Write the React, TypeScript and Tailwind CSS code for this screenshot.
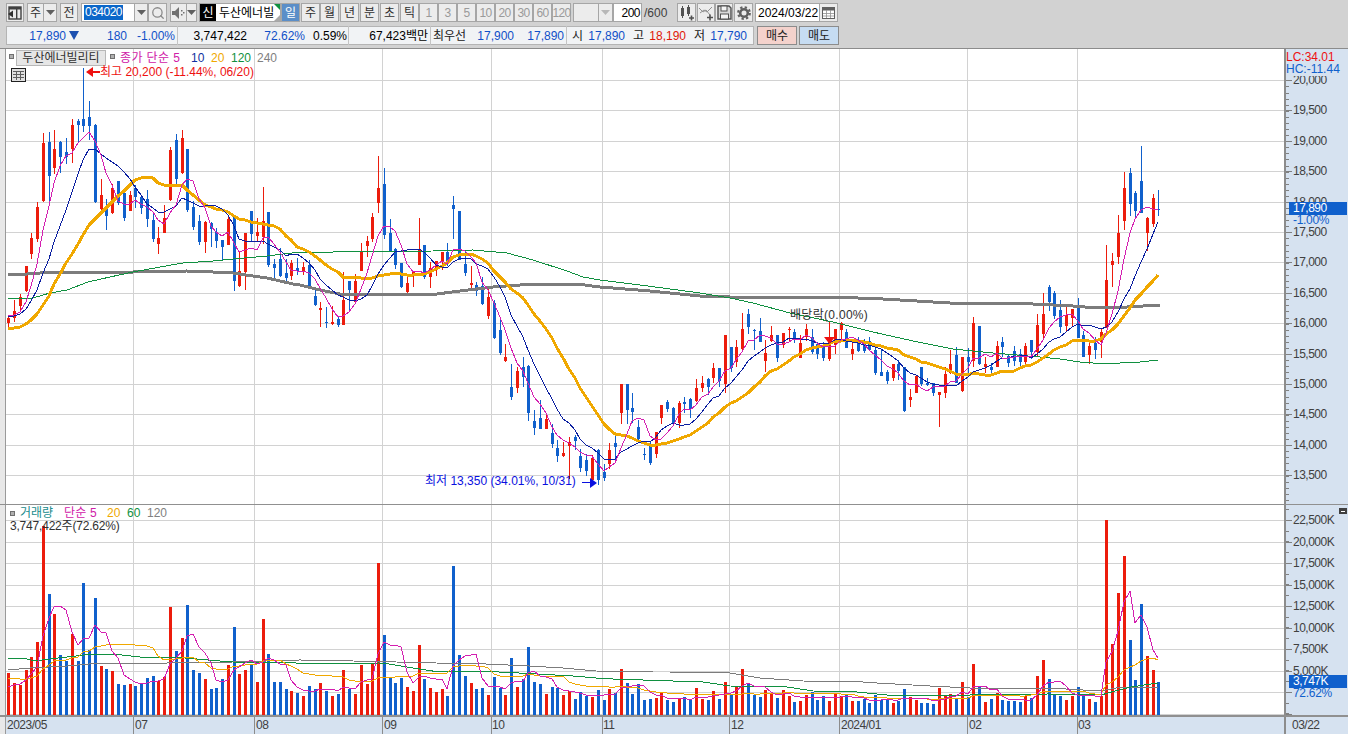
import React from "react";
import { Search } from "lucide-react";

// candle data in page pixels: [up, bodyTop, bodyBottom, high, low]
const candles: number[][] = [
  [1,318,323,317,330],[1,311,318,300,322],[1,297,306,294,310],[1,266,291,266,292],[1,238,254,233,259],
  [1,207,239,202,242],[1,143,201,133,202],[0,142,176,132,201],[1,149,168,130,174],[0,142,157,141,173],
  [0,152,157,138,164],[1,125,149,119,163],[0,121,125,119,142],[0,119,126,68,132],[0,117,126,101,140],
  [0,125,202,124,203],[1,195,209,179,210],[0,208,216,199,230],[1,188,213,184,214],[0,181,203,181,205],
  [0,193,218,192,221],[1,195,211,191,211],[0,188,197,185,208],[0,197,208,195,214],[0,199,219,190,227],
  [0,220,239,213,242],[1,238,244,227,254],[1,218,233,205,233],[1,150,200,147,201],[0,140,179,134,184],
  [1,138,173,130,174],[0,149,210,149,212],[0,207,227,201,230],[0,221,242,215,245],[1,222,242,221,253],
  [0,223,229,222,247],[0,232,241,228,248],[0,240,247,240,261],[1,219,245,216,245],[0,216,281,216,291],
  [1,271,286,252,287],[1,233,272,233,290],[0,211,234,211,241],[1,232,236,218,242],[1,221,237,187,244],
  [0,212,265,212,267],[0,264,268,259,281],[0,259,276,248,277],[0,273,278,259,283],[1,263,276,260,280],
  [0,268,271,258,275],[1,267,271,262,275],[0,265,287,260,288],[0,296,305,287,306],[1,308,310,302,327],
  [0,322,323,307,328],[1,322,324,306,325],[0,319,325,317,327],[1,300,325,272,325],[0,281,290,281,312],
  [1,281,302,274,303],[1,251,271,243,271],[1,241,246,236,257],[1,217,239,213,242],[1,188,203,156,213],
  [0,184,235,168,239],[0,233,252,219,252],[0,249,265,248,269],[0,263,287,263,288],[1,283,292,277,293],
  [1,271,276,271,287],[1,249,265,218,265],[0,245,277,245,279],[1,268,277,262,288],[1,261,270,261,276],
  [1,252,261,252,270],[0,252,262,243,266],[0,205,209,196,239],[0,211,260,211,260],[0,264,273,250,276],
  [1,283,285,266,291],[0,285,291,282,296],[0,286,304,277,305],[1,297,316,288,319],[0,303,338,300,339],
  [0,330,353,320,355],[1,357,361,344,362],[0,387,397,364,400],[1,371,388,367,393],[0,367,377,357,387],
  [0,366,413,365,421],[0,421,428,410,435],[0,418,429,400,429],[1,419,429,414,429],[0,433,444,424,448],
  [0,448,456,440,462],[1,453,456,442,457],[1,442,446,437,479],[0,437,441,435,450],[0,456,468,449,472],
  [0,460,471,454,476],[1,458,480,455,485],[0,450,480,449,485],[0,472,478,464,481],[1,450,464,443,469],
  [0,443,447,433,460],[1,384,413,384,424],[0,384,410,384,424],[0,408,412,393,423],[0,427,439,420,443],
  [0,454,455,448,460],[0,446,463,441,465],[1,432,454,432,458],[1,405,418,405,424],[0,402,409,400,412],
  [0,408,423,407,425],[1,403,423,401,428],[0,402,404,397,413],[0,399,409,398,418],[1,388,401,379,402],
  [1,383,388,376,392],[0,379,387,378,395],[1,368,378,363,383],[0,368,381,368,387],[1,335,384,335,393],
  [0,347,368,347,372],[1,347,362,340,367],[1,329,349,313,350],[0,314,327,309,334],[0,330,331,329,350],
  [0,331,342,318,342],[1,353,361,340,372],[1,335,341,326,342],[0,335,358,335,362],[1,333,345,333,348],
  [1,329,330,327,341],[0,332,339,329,343],[1,343,358,335,358],[1,329,337,324,341],[0,337,352,329,354],
  [0,344,354,342,359],[0,347,358,342,361],[1,338,359,322,361],[1,329,345,329,354],[1,323,330,322,341],
  [0,332,348,329,348],[1,349,354,339,360],[0,341,351,337,352],[0,343,351,339,353],[0,341,350,337,350],
  [0,350,373,347,375],[0,372,376,350,376],[0,372,381,370,384],[1,364,378,364,381],[0,364,371,360,380],
  [0,367,411,367,412],[1,397,400,389,407],[1,376,393,376,393],[0,367,384,367,386],[0,383,385,378,386],
  [0,383,393,383,396],[1,392,395,392,427],[1,374,393,367,398],[1,364,373,350,374],[0,355,383,347,383],
  [1,357,391,357,392],[0,357,362,348,375],[1,323,361,317,367],[0,326,364,326,365],[1,364,367,357,373],
  [0,367,370,363,375],[1,346,367,341,367],[0,342,347,337,357],[0,356,363,355,367],[0,351,361,346,366],
  [0,354,362,349,366],[1,346,362,343,365],[0,340,352,340,359],[1,325,352,314,357],[1,314,334,293,339],
  [0,287,302,285,311],[0,293,316,291,319],[0,310,327,300,333],[1,315,326,307,332],[1,309,318,309,326],
  [0,305,338,298,338],[0,335,357,331,357],[1,346,355,340,364],[0,343,350,337,359],[1,332,342,329,358],
  [1,280,327,245,328],[1,261,265,253,287],[1,233,257,215,264],[1,188,221,172,230],[0,173,204,168,216],
  [0,193,211,191,217],[0,181,213,146,213],[1,218,233,217,251],[1,198,224,194,227],[0,209,210,190,216],
];

// volume bar tops in page pixels
const volTops: number[] = [
  673,683,685,670,657,642,526,594,614,655,661,634,661,583,650,598,666,669,671,684,
  685,684,686,683,678,676,681,677,607,651,638,605,670,673,679,689,688,679,665,627,
  674,670,665,682,619,654,682,682,689,691,693,696,686,689,683,691,696,694,670,689,
  694,665,684,664,563,635,678,683,678,687,691,645,679,688,692,689,696,566,655,676,
  683,689,688,695,677,688,695,658,687,679,647,682,684,694,687,688,695,691,699,692,
  696,697,690,700,689,693,669,683,694,684,700,699,698,693,700,702,699,697,700,688,
  699,700,691,699,682,695,687,669,683,695,697,690,693,698,690,696,702,701,695,692,
  700,696,701,694,696,695,701,701,699,703,695,700,699,703,701,689,697,700,703,703,
  704,688,696,694,699,682,697,664,686,702,699,693,700,701,701,702,696,698,676,660,
  679,695,696,700,696,687,695,699,702,696,520,644,593,556,640,680,604,656,670,682,
];

const barX = (i: number) => Math.round(8.2 + i * 5.78);

const sma = (vals: number[], hist: number[], n: number) => {
  const all = [...hist, ...vals];
  return vals.map((_, i) => {
    const end = i + hist.length + 1;
    const win = all.slice(Math.max(0, end - n), end);
    return Math.round(win.reduce((a, b) => a + b, 0) / win.length);
  });
};

const toPoints = (vals: number[]) => vals.map((y, i) => `${barX(i)},${y}`).join(" ");

const closes = candles.map((c) => (c[0] ? c[1] : c[2]));
const priceHist = [320, 320, 320, 320, 320, 320, 370, 370, 370, 370, 316, 316, 316, 316, 316, 316, 316, 316, 316];
const volHist = [...Array(15).fill(675), 690, 690, 690, 690];

const ma120 =
  "8,299 33,298 50,293 67,290 88,282 110,277 133,272 160,267 183,263 213,261 233,259 267,256 300,252 333,252 433,251 473,250 507,253 533,260 567,271 583,277 600,280 640,285 700,293 730,298 753,303 790,313 833,322 873,332 913,341 953,349 993,353 1040,357 1060,359 1080,362 1093,363 1120,363 1140,362 1158,360";
const ma240 =
  "8,274 27,274 53,272 100,272 133,272 187,271 213,272 233,273 253,276 267,278 293,284 300,285 320,290 340,294 407,295 437,294 460,291 493,287 533,284 577,284 600,287 650,291 700,296 730,297 833,297 883,299 950,303 1013,303 1073,306 1097,308 1127,307 1160,305";
const vol60 =
  "8,658 23,658 35,661 50,659 67,657 93,654 113,654 140,657 173,657 220,661 233,662 267,662 296,663 333,663 336,664 379,663 389,664 413,668 439,672 453,671 479,671 519,673 573,676 596,678 613,679 673,681 703,682 730,686 787,687 813,691 857,692 887,695 970,695 1048,694 1101,695 1115,691 1131,687 1158,683";
const vol120 =
  "8,670 30,668 67,666 100,663 167,663 233,662 300,660 353,661 396,662 436,663 486,664 529,666 563,668 596,671 653,672 670,672 730,673 760,678 803,681 863,682 877,683 930,686 970,688 1048,688 1101,691 1121,687 1158,687";

const priceTicks = ["20,000", "19,500", "19,000", "18,500", "18,000", "17,500", "17,000", "16,500", "16,000", "15,500", "15,000", "14,500", "14,000", "13,500"];
const volTicks = ["22,500K", "20,000K", "17,500K", "15,000K", "12,500K", "10,000K", "7,500K", "5,000K"];
const monthLines = [133, 254, 382, 491, 602, 729, 839, 967, 1077];
const monthLabels: [string, number][] = [
  ["2023/05", 7],
  ["07", 135],
  ["08", 256],
  ["09", 384],
  ["10", 492],
  ["11", 603],
  ["12", 731],
  ["2024/01", 841],
  ["02", 969],
  ["03", 1078],
];

const btn = "flex h-[19px] items-center justify-center border border-[#a6a6a6] shrink-0";
const plain = `${btn} bg-[#ececec] text-[#303030]`;

const Arrow = ({ light }: { light?: boolean }) => (
  <svg width="9" height="5" viewBox="0 0 9 5">
    <polygon points="0,0 9,0 4.5,5" fill={light ? "#b8b8b8" : "#606060"} />
  </svg>
);

const Tab = ({ label, active, dim }: { label: string; active?: boolean; dim?: boolean }) => (
  <div
    className={`${btn} w-[19px] ${
      active ? "bg-[#5b8ec8] text-white" : dim ? "bg-[#ececec] tracking-[-0.7px] text-[#9a9a9a]" : "bg-[#ececec] text-[#303030]"
    }`}
  >
    {label}
  </div>
);

const Toolbar = () => (
  <div className="flex h-[25px] items-start pl-[6px] pt-[3px]">
    <div className={`${plain} w-[18px]`}>
      <svg width="14" height="14" viewBox="0 0 14 14">
        <rect x="1" y="1" width="12" height="12" fill="none" stroke="#404040" strokeWidth="1.4" />
        <rect x="1" y="1" width="12" height="2.5" fill="#404040" />
        <rect x="8" y="3" width="1.4" height="10" fill="#404040" />
        <polygon points="0,8 5,4.500 5,11.500" fill="#303030" />
      </svg>
    </div>
    <div className={`${plain} ml-[3px] w-[17px]`}>주</div>
    <div className={`${plain} w-[13px] border-l-0`}><Arrow /></div>
    <div className={`${plain} ml-[3px] w-[18px]`}>전</div>
    <div className="ml-[3px] flex h-[19px] w-[54px] shrink-0 items-center border border-[#a6a6a6] bg-white pl-[2px]">
      <span className="bg-[#0b67c9] px-[1px] leading-[15px] tracking-[-0.5px] text-white">034020</span>
    </div>
    <div className={`${plain} w-[13px] border-l-0`}><Arrow /></div>
    <div className={`${plain} w-[19px]`}><Search size={14} strokeWidth={2.2} color="#8a8a8a" /></div>
    <div className={`${plain} ml-[3px] w-[17px]`}>
      <svg width="13" height="12" viewBox="0 0 13 12">
        <polygon points="0,4 3,4 7,0 7,12 3,8 0,8" fill="#707070" />
        <rect x="9" y="3" width="1.500" height="1.500" fill="#707070" />
        <rect x="9" y="7" width="1.500" height="1.500" fill="#707070" />
        <rect x="11" y="5" width="1.500" height="1.500" fill="#707070" />
      </svg>
    </div>
    <div className={`${plain} w-[10px] border-l-0`}><Arrow /></div>
    <div className="relative ml-[2px] flex h-[19px] w-[82px] shrink-0 items-center overflow-hidden border border-[#a6a6a6] bg-white">
      <span className="flex h-[17px] w-[16px] items-center justify-center bg-black text-white">신</span>
      <span className="ml-[3px] whitespace-nowrap text-black">두산에너빌</span>
      <svg className="absolute right-0 top-0" width="6" height="6" viewBox="0 0 6 6">
        <polygon points="0,0 6,0 6,6" fill="#109040" />
      </svg>
      <svg className="absolute bottom-0 right-0" width="6" height="6" viewBox="0 0 6 6">
        <polygon points="0,6 6,6 6,0" fill="#a8a8a8" />
      </svg>
    </div>
    <Tab label="일" active />
    <div className="ml-[1px] flex">
      <Tab label="주" />
      <Tab label="월" />
    </div>
    <div className="ml-[1px] flex">
      <Tab label="년" />
    </div>
    <div className="ml-[1px] flex gap-[1px]">
      <Tab label="분" />
      <Tab label="초" />
      <Tab label="틱" />
    </div>
    <div className="flex">
      <Tab label="1" dim />
      <Tab label="3" dim />
      <Tab label="5" dim />
      <Tab label="10" dim />
      <Tab label="20" dim />
      <Tab label="30" dim />
      <Tab label="60" dim />
      <Tab label="120" dim />
    </div>
    <div className={`${plain} ml-[2px] w-[26px]`} />
    <div className={`${plain} w-[14px] border-l-0`}><Arrow light /></div>
    <div className="flex h-[19px] w-[29px] shrink-0 items-center justify-end border border-[#a6a6a6] bg-white pr-[1px] tracking-[-0.5px] text-black">200</div>
    <div className="ml-[2px] flex h-[19px] w-[33px] shrink-0 items-center text-[#404040]">/600</div>
    <div className={`${plain} w-[19px]`}>
      <svg width="16" height="16" viewBox="0 0 16 16">
        <rect x="2" y="3" width="3" height="8" fill="#505050" />
        <rect x="3" y="1" width="1" height="12" fill="#505050" />
        <rect x="8" y="2" width="3" height="7" fill="#505050" />
        <rect x="9" y="0" width="1" height="11" fill="#505050" />
        <path d="M10 13h5M12.500 10.500v5" stroke="#505050" strokeWidth="1.6" />
      </svg>
    </div>
    <div className={`${plain} ml-[1px] w-[18px]`}>
      <svg width="16" height="16" viewBox="0 0 16 16">
        <path d="M1 3l4 4 3-2 4 5" fill="none" stroke="#909090" />
        <path d="M2 8l4-3 3 2 5-5" fill="none" stroke="#909090" />
        <path d="M9 12.500h6M12 9.500v6" stroke="#505050" strokeWidth="1.6" />
      </svg>
    </div>
    <div className={`${plain} w-[18px]`}>
      <svg width="15" height="15" viewBox="0 0 15 15">
        <path d="M1 1h11l2 2v11H1z" fill="#d8d8d8" stroke="#505050" strokeWidth="1.4" />
        <rect x="4" y="1" width="6" height="5" fill="#f4f4f4" stroke="#505050" />
        <rect x="3.500" y="9" width="8" height="5" fill="#f4f4f4" stroke="#505050" />
      </svg>
    </div>
    <div className={`${plain} ml-[1px] w-[19px]`}>
      <svg width="14" height="14" viewBox="0 0 14 14">
        <circle cx="7" cy="7" r="3.800" fill="none" stroke="#606060" strokeWidth="2.600" />
        <circle cx="7" cy="7" r="5.800" fill="none" stroke="#606060" strokeWidth="2.200" strokeDasharray="2.300 2.250" />
      </svg>
    </div>
    <div className="ml-[2px] flex h-[19px] w-[65px] shrink-0 items-center border border-[#a6a6a6] bg-white pl-[2px] text-black">2024/03/22</div>
    <div className={`${plain} w-[18px] border-l-0`}>
      <svg width="13" height="12" viewBox="0 0 13 12">
        <rect x="0.500" y="0.500" width="12" height="11" fill="#fff" stroke="#606060" />
        <rect x="0.500" y="0.500" width="12" height="3" fill="#606060" />
        <path d="M4.500 3v8M8.500 3v8M1 6.500h11M1 9h11" stroke="#909090" strokeWidth="0.800" />
      </svg>
    </div>
  </div>
);

const InfoRow = () => (
  <div className="flex h-[23px] items-start pl-[6px] pt-[1px]">
    <div className="flex h-[19px] w-[748px] items-center whitespace-nowrap border border-[#b4b4b4] bg-[#f1f3f5] text-[#1050c8]">
      <span className="ml-[22px] w-[37px] text-right">17,890</span>
      <svg className="ml-[3px]" width="10" height="9" viewBox="0 0 10 9">
        <polygon points="0,0 10,0 5,9" fill="#1c50b0" />
      </svg>
      <span className="w-[48px] text-right">180</span>
      <span className="w-[48px] text-right">-1.00%</span>
      <span className="ml-[2px] h-[19px] w-px bg-[#c4c4c4]" />
      <span className="w-[69px] text-right text-black">3,747,422</span>
      <span className="w-[58px] text-right">72.62%</span>
      <span className="w-[42px] text-right text-black">0.59%</span>
      <span className="ml-[1px] h-[19px] w-px bg-[#c4c4c4]" />
      <span className="w-[79px] text-right text-black">67,423백만</span>
      <span className="ml-[2px] h-[19px] w-px bg-[#c4c4c4]" />
      <span className="ml-[2px] w-[36px] text-[#202020]">최우선</span>
      <span className="w-[45px] text-right">17,900</span>
      <span className="w-[50px] text-right">17,890</span>
      <span className="ml-[2px] h-[19px] w-px bg-[#c4c4c4]" />
      <span className="ml-[5px] w-[12px] text-[#202020]">시</span>
      <span className="ml-[4px] w-[37px] text-right">17,890</span>
      <span className="ml-[8px] w-[12px] text-[#202020]">고</span>
      <span className="ml-[4px] w-[37px] text-right text-[#e01808]">18,190</span>
      <span className="ml-[8px] w-[12px] text-[#202020]">저</span>
      <span className="ml-[4px] w-[37px] text-right">17,790</span>
    </div>
    <div className="ml-[3px] flex h-[19px] w-[40px] items-center justify-center border border-[#8c8c8c] bg-[#f4d2cc] text-[#202020]">매수</div>
    <div className="ml-[2px] flex h-[19px] w-[40px] items-center justify-center border border-[#8c8c8c] bg-[#c6dcf2] text-[#202020]">매도</div>
  </div>
);

const Grid = ({ lines, height, top }: { lines: number[]; height: number; top: number }) => (
  <g shapeRendering="crispEdges">
    {lines.map((y) => (
      <rect key={y} x="6" y={y} width="1278" height="1" fill="#d2d2d2" />
    ))}
    {monthLines.map((x) => (
      <rect key={x} x={x} y={top} width="1" height={height} fill="#d2d2d2" />
    ))}
  </g>
);

const AxisTicks = ({ from, to, step, majors }: { from: number; to: number; step: number; majors: number[] }) => {
  const minor: number[] = [];
  for (let y = from; y < to; y += step) minor.push(Math.round(y));
  return (
    <g shapeRendering="crispEdges" fill="#808080">
      {minor.map((y) => (
        <rect key={y} x="0" y={y} width="3" height="1" />
      ))}
      {majors.map((y) => (
        <rect key={y} x="0" y={y} width="6" height="1" />
      ))}
    </g>
  );
};

const priceLines = priceTicks.map((_, i) => Math.round(80 + i * 30.4));
const volLines = [520, 542, 563, 585, 606, 628, 649, 671, 692, 714];

const PricePane = () => (
  <div className="flex h-[456px] border-b border-[#909090]">
    <div className="w-[6px] shrink-0 border-r border-[#9a9a9a] bg-[#e8e8e8]" />
    <div className="relative w-[1278px] shrink-0 bg-white">
      <svg width="1278" height="455" viewBox="6 49 1278 455" className="block">
        <Grid lines={priceLines} height={455} top={49} />
        <g shapeRendering="crispEdges">
          {candles.map((c, i) => (
            <g key={i} fill={c[0] ? "#ec1c0c" : "#1060cc"}>
              <rect x={barX(i)} y={c[3]} width="1" height={c[4] - c[3]} />
              <rect x={barX(i) - 1} y={c[1]} width="3" height={Math.max(1, c[2] - c[1])} />
            </g>
          ))}
          <polyline points={ma240} fill="none" stroke="#7c7c7c" strokeWidth="3" />
          <polyline points={ma120} fill="none" stroke="#109040" strokeWidth="1" />
          <polyline points={toPoints(sma(closes, priceHist, 20))} fill="none" stroke="#f0a800" strokeWidth="3" />
          <polyline points={toPoints(sma(closes, priceHist, 10))} fill="none" stroke="#0a1ea0" strokeWidth="1" />
          <polyline points={toPoints(sma(closes, priceHist, 5))} fill="none" stroke="#d41fb0" strokeWidth="1" />
        </g>
        <polygon points="86,72 93,67 93,77" fill="#ee1010" />
        <rect x="93" y="71" width="7" height="2" fill="#ee1010" />
        <rect x="582" y="482" width="9" height="1" fill="#0a10e0" />
        <polygon points="597,483 590,478 590,488" fill="#0a10e0" />
        <polygon points="824,337 835,337 829.500,344" fill="#ee1010" />
      </svg>
      <div className="absolute left-[3px] top-[5px] size-[5px] border border-[#707070] bg-[#b0b0b0]" />
      <div className="absolute left-[10px] top-[1px] flex h-[16px] w-[90px] items-center justify-center whitespace-nowrap border border-[#b8b8b8] bg-[#e6e6e6] text-[#303030]">두산에너빌리티</div>
      <div className="absolute left-[104px] top-[5px] size-[5px] border border-[#707070] bg-[#b0b0b0]" />
      <div className="absolute left-[114px] top-[2px] flex whitespace-nowrap">
        <span className="w-[71px] tracking-[0.4px] text-[#d020a8]">종가 단순 5</span>
        <span className="w-[20px] text-[#1030a0]">10</span>
        <span className="w-[20px] text-[#f0a800]">20</span>
        <span className="w-[26px] text-[#109040]">120</span>
        <span className="text-[#808080]">240</span>
      </div>
      <svg className="absolute left-[5px] top-[19px]" width="15" height="14" viewBox="0 0 15 14">
        <rect x="0.500" y="0.500" width="14" height="13" fill="#e0e0e0" stroke="#202020" />
        <path d="M2 3.500h11M2 6.500h11M2 9.500h11M5.500 3v9M9.500 3v9" stroke="#606060" />
      </svg>
      <span className="absolute left-[94px] top-[16px] whitespace-nowrap text-[#ee1010]">최고 20,200 (-11.44%, 06/20)</span>
      <span className="absolute left-[419px] top-[425px] whitespace-nowrap text-[#0a10e0]">최저 13,350 (34.01%, 10/31)</span>
      <span className="absolute left-[784px] top-[259px] whitespace-nowrap tracking-[0.3px] text-[#303030]">배당락(0.00%)</span>
    </div>
    <div className="relative flex-1 border-l-2 border-[#8c8c8c] bg-[#d6e2f0]">
      <svg width="62" height="455" viewBox="0 49 62 455" className="block">
        <AxisTicks from={50} to={504} step={6.08} majors={priceLines} />
        <g fill="#404040" fontSize="12" letterSpacing="-0.5">
          {priceTicks.map((t, i) => (
            <text key={t} x="7" y={priceLines[i] + 4}>{t}</text>
          ))}
        </g>
      </svg>
      <div className="absolute left-0 top-[1px] h-[26px] w-[60px] bg-[#d6e2f0] pt-[1px] leading-[12px]">
        <div className="text-[#ee1010]">LC:34.01</div>
        <div className="text-[#1060cc]">HC:-11.44</div>
      </div>
      <div className="absolute left-[3px] top-[153px] w-[58px] bg-[#1060cc] pl-[4px] leading-[13px] tracking-[-0.5px] text-white">17,890</div>
      <div className="absolute left-[3px] top-[166px] w-[58px] bg-[#d6e2f0] pl-[4px] leading-[11px] tracking-[-0.3px] text-[#1060cc]">-1.00%</div>
    </div>
  </div>
);

const VolumePane = () => (
  <div className="flex h-[212px] border-b-2 border-[#909090]">
    <div className="w-[6px] shrink-0 border-r border-[#9a9a9a] bg-[#e8e8e8]" />
    <div className="relative w-[1278px] shrink-0 bg-white">
      <svg width="1278" height="210" viewBox="6 505 1278 210" className="block">
        <Grid lines={volLines} height={210} top={505} />
        <g shapeRendering="crispEdges">
          {volTops.map((y, i) => (
            <rect key={i} x={barX(i) - 1} y={y} width="3" height={715 - y} fill={candles[i][0] ? "#ec1c0c" : "#1060cc"} />
          ))}
          <polyline points={vol120} fill="none" stroke="#7c7c7c" strokeWidth="1" />
          <polyline points={vol60} fill="none" stroke="#109040" strokeWidth="1" />
          <polyline points={toPoints(sma(volTops, volHist, 20))} fill="none" stroke="#f0a800" strokeWidth="1" />
          <polyline points={toPoints(sma(volTops, volHist, 5))} fill="none" stroke="#d41fb0" strokeWidth="1" />
        </g>
      </svg>
      <div className="absolute left-[4px] top-[6px] size-[5px] border border-[#707070] bg-[#b0b0b0]" />
      <div className="absolute left-[14px] top-[1px] flex whitespace-nowrap">
        <span className="w-[44px] text-[#208c8c]">거래량</span>
        <span className="w-[43px] tracking-[0.2px] text-[#d020a8]">단순 5</span>
        <span className="w-[20px] text-[#f0a800]">20</span>
        <span className="w-[20px] text-[#109040]">60</span>
        <span className="text-[#808080]">120</span>
      </div>
      <span className="absolute left-[4px] top-[14px] whitespace-nowrap tracking-[-0.2px] text-[#303030]">3,747,422주(72.62%)</span>
    </div>
    <div className="relative flex-1 border-l-2 border-[#8c8c8c] bg-[#d6e2f0]">
      <svg width="62" height="210" viewBox="0 505 62 210" className="block">
        <AxisTicks from={509} to={714} step={10.75} majors={volLines} />
        <g fill="#404040" fontSize="12" letterSpacing="-0.5">
          {volTicks.map((t, i) => (
            <text key={t} x="7" y={volLines[i] + 4}>{t}</text>
          ))}
        </g>
      </svg>
      <div className="absolute right-[1px] top-[3px] flex h-[6px] w-[8px] items-center justify-center bg-[#404040]">
        <div className="h-px w-[4px] bg-white" />
      </div>
      <div className="absolute left-[3px] top-[170px] w-[58px] bg-[#1060cc] pl-[4px] leading-[13px] tracking-[-0.5px] text-white">3,747K</div>
      <div className="absolute left-[3px] top-[183px] w-[58px] pl-[4px] leading-[11px] tracking-[-0.3px] text-[#1060cc]">72.62%</div>
    </div>
  </div>
);

const DateAxis = () => (
  <div className="flex flex-1 bg-[#d6e2f0]">
    <div className="w-[6px] shrink-0 border-r border-[#9a9a9a] bg-[#e8e8e8]" />
    <div className="relative w-[1278px] shrink-0 tracking-[-0.5px]">
      {monthLines.map((x) => (
        <div key={x} className="absolute top-0 h-full w-px bg-[#8c8c8c]" style={{ left: x - 6 }} />
      ))}
      {monthLabels.map(([label, x]) => (
        <span key={label} className="absolute top-[1px] text-[#404040]" style={{ left: x - 6 }}>{label}</span>
      ))}
    </div>
    <div className="flex-1 border-l-2 border-[#8c8c8c] pl-[6px] pt-[1px] tracking-[-0.5px] text-[#404040]">03/22</div>
  </div>
);

export default function App() {
  return (
    <div className="flex h-[734px] w-[1348px] flex-col overflow-hidden bg-[#d2d2d2] font-['Liberation_Sans','Noto_Sans_CJK_KR',sans-serif] text-[12px] leading-[14px]">
      <Toolbar />
      <InfoRow />
      <div className="flex flex-1 flex-col border-t border-[#8c8c8c]">
        <PricePane />
        <VolumePane />
        <DateAxis />
      </div>
    </div>
  );
}
